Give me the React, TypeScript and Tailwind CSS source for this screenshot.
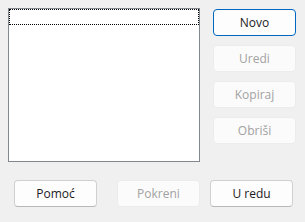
export default function App() {
  const btn =
    "flex h-[27px] w-[83px] items-center justify-center rounded-[4px] border text-[12px]";
  const enabled = `${btn} border-[#d0d0d0] border-b-[#b8b8b8] bg-[#fdfdfd] text-[#1b1b1b]`;
  const disabled = `${btn} border-[#ececec] bg-[#fbfbfb] text-[#a2a2a2]`;

  return (
    <div
      className="flex h-[222px] w-[305px] flex-col bg-[#f0f0f0]"
      style={{ fontFamily: '"Segoe UI", "Open Sans", "Noto Sans", sans-serif' }}
    >
      <div className="flex pl-[8px] pt-[8px]">
        {/* List box */}
        <div className="h-[154px] w-[192px] border border-[#828790] bg-white">
          <div className="h-[16px] w-full border border-dotted border-black" />
        </div>

        {/* Side buttons */}
        <div className="ml-[13px] flex flex-col gap-[9px] pt-[1px]">
          <button className={`${btn} border-[#0067c0] bg-[#fdfdfd] text-[#1b1b1b]`}>
            Novo
          </button>
          <button className={disabled} disabled>
            Uredi
          </button>
          <button className={disabled} disabled>
            Kopiraj
          </button>
          <button className={disabled} disabled>
            Obriši
          </button>
        </div>
      </div>

      {/* Bottom buttons */}
      <div className="mt-[18px] flex pl-[14px]">
        <button className={enabled}>Pomoć</button>
        <button className={`${disabled} ml-[20px] w-[82px]`} disabled>
          Pokreni
        </button>
        <button className={`${enabled} ml-[10px] w-[82px]`}>U redu</button>
      </div>
    </div>
  );
}
